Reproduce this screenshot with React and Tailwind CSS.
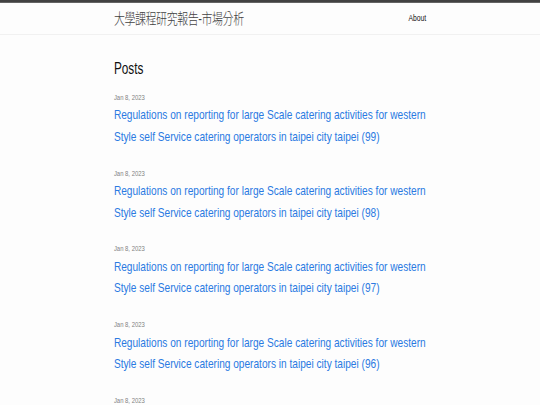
import React from "react";

const posts = [99, 98, 97, 96, 95, 94];

export default function App() {
  return (
    <div className="w-[540px] h-[405px] overflow-hidden bg-[#fdfdfd]">
      <div
        className="w-[1280px] h-[720px] origin-top-left scale-x-[0.421875] scale-y-[0.5625] bg-[#fdfdfd] text-[#111] text-[16px] leading-[1.5]"
        style={{ fontFamily: '"Liberation Sans", Arial, "Noto Sans CJK TC", sans-serif' }}
      >
        <header className="border-t-[5px] border-t-[#424242] border-b border-b-[#e8e8e8]">
          <div className="max-w-[800px] mx-auto px-[30px] h-[56px] flex items-center justify-between">
            <a
              className="text-[26px] font-light tracking-[-1px] leading-[54px] text-[#424242]"
              style={{ fontFamily: '"Liberation Sans", "Noto Sans CJK TC", sans-serif' }}
            >
              大學課程研究報告-市場分析
            </a>
            <nav>
              <a className="text-[16px] leading-[24px] text-[#111]">About</a>
            </nav>
          </div>
        </header>
        <main className="max-w-[800px] mx-auto px-[30px] pt-[38.5px]">
          <h2 className="text-[28px] leading-[42px] font-normal mb-[20.5px]">Posts</h2>
          <ul>
            {posts.map((n) => (
              <li key={n} className="mb-[36.7px]">
                <span className="block text-[14px] leading-[20px] text-[#828282]">Jan 8, 2023</span>
                <h3 className="text-[24px] leading-[38px] font-normal mt-[2px]">
                  <a className="block text-[#2a7ae2]">
                    Regulations on reporting for large Scale catering activities for western Style self Service catering operators in taipei city taipei ({n})
                  </a>
                </h3>
              </li>
            ))}
          </ul>
        </main>
      </div>
    </div>
  );
}
